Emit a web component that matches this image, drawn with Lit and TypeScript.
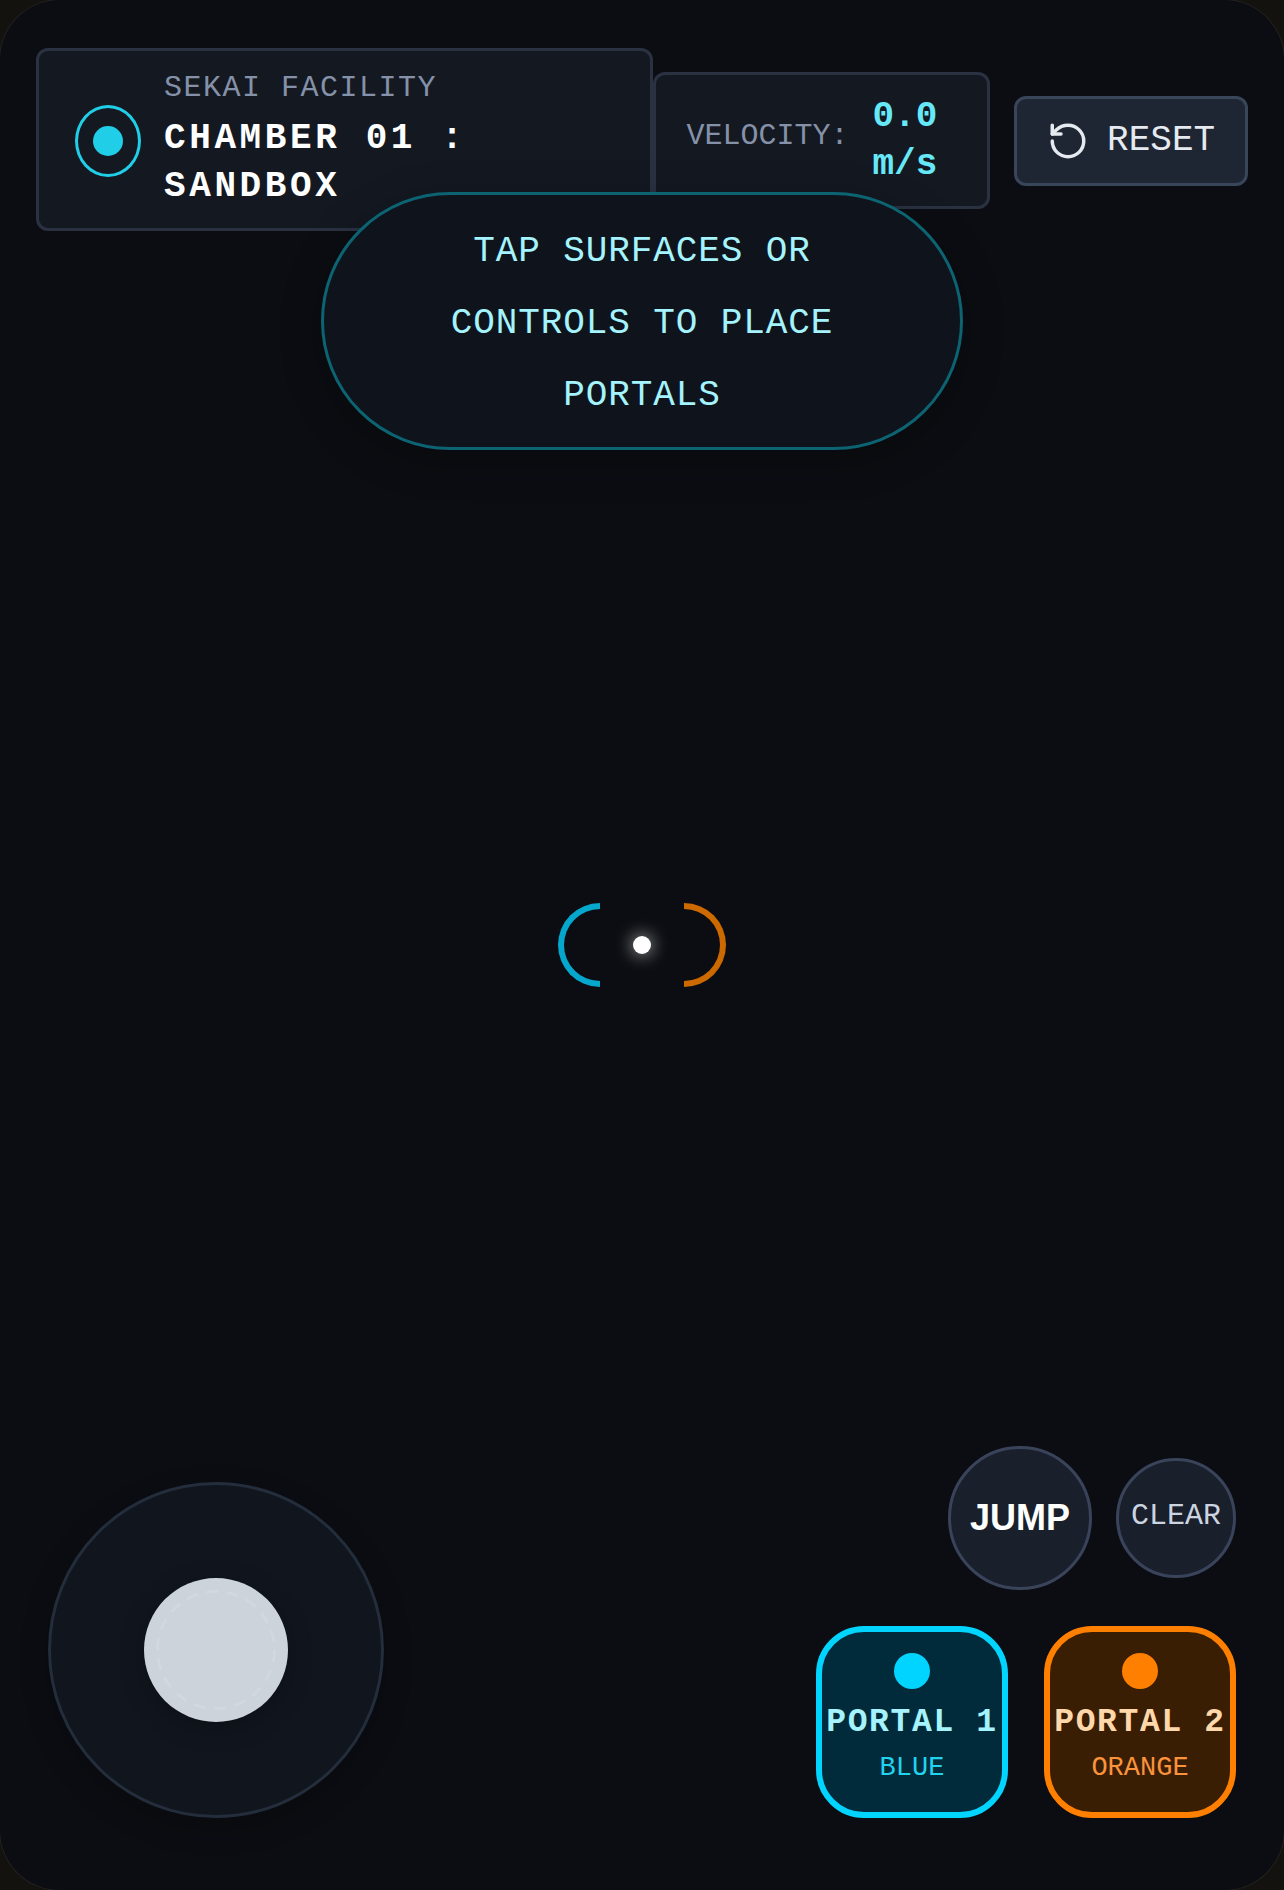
import { LitElement, css, html } from "lit";
import { customElement } from "lit/decorators.js";

@customElement("app-root")
export class AppRoot extends LitElement {
  static styles = css`
    :host {
      display: block;
      width: 1284px;
      height: 1890px;
      background: #13120f;
      font-family: "Liberation Mono", monospace;
    }

    .frame {
      position: relative;
      box-sizing: border-box;
      width: 1284px;
      height: 1890px;
      padding: 48px 36px 72px;
      display: flex;
      flex-direction: column;
      justify-content: space-between;
      background: #0b0d12;
      border-radius: 60px;
      box-shadow: 0 0 0 1px #23221e;
      overflow: hidden;
    }

    /* header */
    .top {
      display: flex;
      align-items: flex-start;
    }
    .panel {
      box-sizing: border-box;
      background: #141821;
      border: 3px solid #2a3242;
      border-radius: 12px;
      display: flex;
      align-items: center;
    }
    .chamber {
      width: 618px;
      height: 183px;
      padding: 0 36px;
      gap: 23px;
    }
    .ring {
      box-sizing: border-box;
      width: 66px;
      height: 72px;
      margin-top: 3px;
      border: 3px solid #21cee7;
      border-radius: 50%;
      display: flex;
      align-items: center;
      justify-content: center;
    }
    .ring span {
      width: 30px;
      height: 30px;
      border-radius: 50%;
      background: #21cee7;
    }
    .labels {
      margin-top: -1px;
    }
    .kicker {
      font-size: 30px;
      line-height: 42px;
      letter-spacing: 0.05em;
      color: #8491a8;
    }
    .name {
      margin-top: 6px;
      width: 360px;
      font-size: 36px;
      line-height: 48px;
      font-weight: 700;
      letter-spacing: 0.1em;
      color: #fff;
    }
    .velocity {
      margin-top: 24px;
      width: 337px;
      height: 137px;
      padding: 0 30px;
      gap: 24px;
    }
    .velocity-label {
      margin-bottom: 10px;
      font-size: 30px;
      color: #8491a8;
    }
    .velocity-value {
      width: 70px;
      margin-top: 1px;
      font-size: 36px;
      line-height: 48px;
      font-weight: 700;
      color: #67e8f9;
    }
    .reset {
      box-sizing: border-box;
      margin: 48px 0 0 24px;
      width: 234px;
      height: 90px;
      display: flex;
      align-items: center;
      justify-content: center;
      gap: 18px;
      background: #1e2533;
      border: 3px solid #394559;
      border-radius: 12px;
      color: #e5e9f0;
      font-family: inherit;
      font-size: 36px;
      padding: 0;
    }
    .reset svg {
      width: 42px;
      height: 42px;
    }
    .reset span {
      margin-bottom: 2px;
    }

    /* hint pill over the header */
    .hint {
      position: absolute;
      left: 321px;
      top: 192px;
      box-sizing: border-box;
      width: 642px;
      height: 258px;
      padding-top: 5px;
      border: 3px solid #0c6473;
      border-radius: 129px;
      background: #0f141c;
      box-shadow: 0 10px 40px rgba(0, 0, 0, 0.25);
      display: flex;
      align-items: center;
      justify-content: center;
      text-align: center;
      font-size: 36px;
      line-height: 72px;
      letter-spacing: 0.025em;
      color: #a5f3fc;
    }

    /* crosshair */
    .cross {
      position: absolute;
      left: 558px;
      top: 903px;
      width: 168px;
      height: 84px;
      display: flex;
      align-items: center;
      justify-content: space-between;
    }
    .arc {
      box-sizing: border-box;
      width: 42px;
      height: 84px;
      border: 6px solid #05a8cc;
    }
    .arc.left {
      border-right: 0;
      border-radius: 42px 0 0 42px;
    }
    .arc.right {
      border-left: 0;
      border-color: #cc6a00;
      border-radius: 0 42px 42px 0;
    }
    .spark {
      width: 18px;
      height: 18px;
      border-radius: 50%;
      background: #fff;
      box-shadow: 0 0 18px rgba(255, 255, 255, 0.8);
    }

    /* bottom controls */
    .bottom {
      display: flex;
      justify-content: space-between;
      align-items: flex-end;
      padding: 0 12px;
    }
    .stick {
      box-sizing: border-box;
      width: 336px;
      height: 336px;
      border-radius: 50%;
      background: #11161e;
      border: 3px solid #232d3b;
      box-shadow: 0 10px 30px rgba(0, 0, 0, 0.2);
      display: flex;
      align-items: center;
      justify-content: center;
    }
    .knob {
      width: 144px;
      height: 144px;
      border-radius: 50%;
      background: #cdd3db;
      box-shadow: 0 6px 24px rgba(0, 0, 0, 0.3);
      display: flex;
      align-items: center;
      justify-content: center;
    }
    .knob svg {
      width: 120px;
      height: 120px;
    }
    .actions {
      display: flex;
      flex-direction: column;
      align-items: flex-end;
      gap: 36px;
    }
    .row {
      display: flex;
      align-items: center;
      gap: 24px;
    }
    .round {
      box-sizing: border-box;
      border-radius: 50%;
      background: #1a1f2c;
      border: 3px solid #39445a;
      display: flex;
      align-items: center;
      justify-content: center;
      padding: 0;
    }
    .jump {
      width: 144px;
      height: 144px;
      font-family: "Liberation Sans", sans-serif;
      font-weight: 700;
      font-size: 36px;
      color: #fff;
    }
    .clear {
      width: 120px;
      height: 120px;
      padding-bottom: 4px;
      font-family: inherit;
      font-size: 30px;
      color: #cbd5e1;
    }
    .portal {
      box-sizing: border-box;
      width: 192px;
      height: 192px;
      border: 6px solid;
      border-radius: 48px;
      display: flex;
      flex-direction: column;
      align-items: center;
      padding: 21px 0 0;
      font-family: inherit;
    }
    .portal.blue {
      border-color: #00d4ff;
      background: #012b3a;
    }
    .portal.orange {
      border-color: #ff7f00;
      background: #3a1e03;
    }
    .portal i {
      width: 36px;
      height: 36px;
      border-radius: 50%;
    }
    .blue i {
      background: #00d4ff;
    }
    .orange i {
      background: #ff7f00;
    }
    .portal b {
      margin-top: 15px;
      font-size: 33px;
      line-height: 38px;
      letter-spacing: 0.05em;
      white-space: nowrap;
    }
    .blue b {
      color: #a5f3fc;
    }
    .orange b {
      color: #fed7aa;
    }
    .portal small {
      margin-top: 10px;
      font-size: 27px;
      line-height: 32px;
    }
    .blue small {
      color: #22d3ee;
    }
    .orange small {
      color: #fb923c;
    }
    .row.portals {
      gap: 36px;
    }
  `;

  render() {
    return html`<div class="frame">
      <div class="top">
        <div class="panel chamber">
          <div class="ring"><span></span></div>
          <div class="labels">
            <div class="kicker">SEKAI FACILITY</div>
            <div class="name">CHAMBER 01 : SANDBOX</div>
          </div>
        </div>
        <div class="panel velocity">
          <div class="velocity-label">VELOCITY:</div>
          <div class="velocity-value">0.0 m/s</div>
        </div>
        <button class="reset">
          <svg
            viewBox="0 0 24 24"
            fill="none"
            stroke="#e5e9f0"
            stroke-width="2"
            stroke-linecap="round"
            stroke-linejoin="round"
          >
            <path d="M3 12a9 9 0 1 0 9-9 9.75 9.75 0 0 0-6.74 2.74L3 8" />
            <path d="M3 3v5h5" />
          </svg>
          <span>RESET</span>
        </button>
      </div>

      <div class="hint">
        <div>TAP SURFACES OR<br />CONTROLS TO PLACE<br />PORTALS</div>
      </div>

      <div class="cross">
        <div class="arc left"></div>
        <div class="spark"></div>
        <div class="arc right"></div>
      </div>

      <div class="bottom">
        <div class="stick">
          <div class="knob">
            <svg viewBox="0 0 120 120" fill="none">
              <circle
                cx="60"
                cy="60"
                r="58.5"
                stroke="#d3d7de"
                stroke-width="3"
                stroke-dasharray="12 8.42"
              />
            </svg>
          </div>
        </div>
        <div class="actions">
          <div class="row">
            <button class="round jump">JUMP</button>
            <button class="round clear">CLEAR</button>
          </div>
          <div class="row portals">
            <button class="portal blue">
              <i></i><b>PORTAL 1</b><small>BLUE</small>
            </button>
            <button class="portal orange">
              <i></i><b>PORTAL 2</b><small>ORANGE</small>
            </button>
          </div>
        </div>
      </div>
    </div>`;
  }
}
